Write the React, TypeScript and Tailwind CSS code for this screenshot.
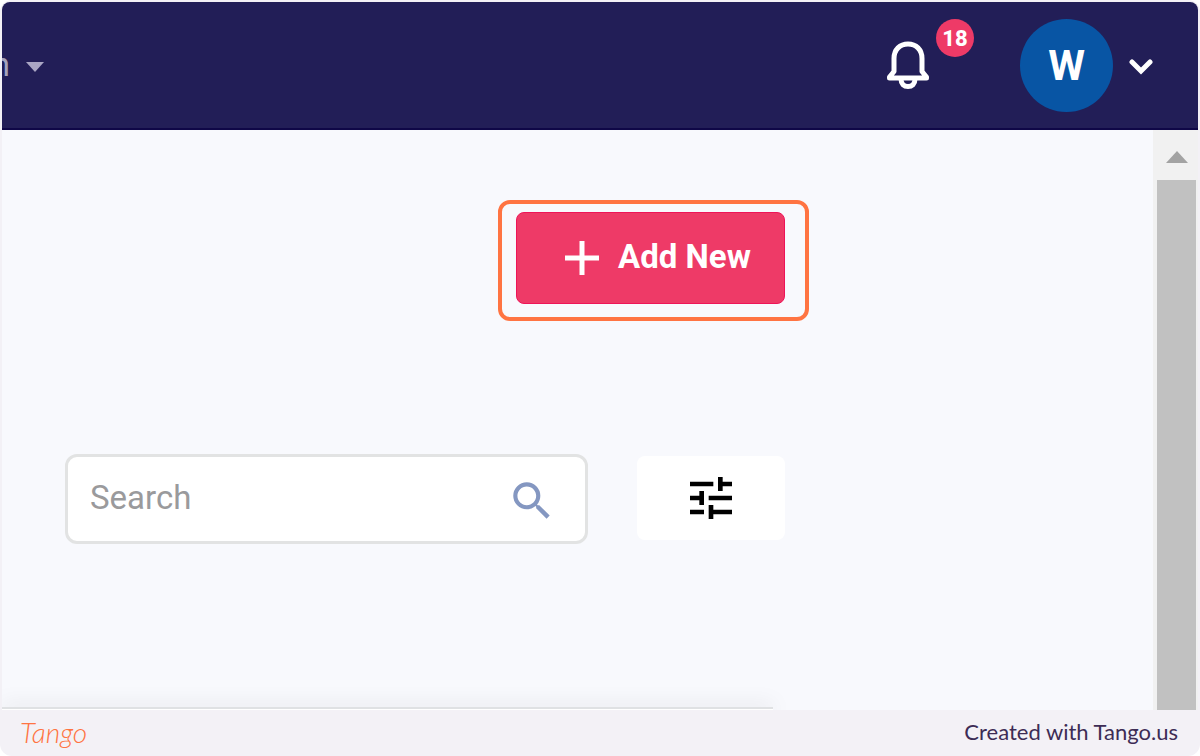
import { MdSearch, MdTune } from 'react-icons/md';

const NOTIFICATION_COUNT = 18;

function BellIcon() {
    return (
        <svg viewBox="0 0 44 50" className="h-[50px] w-11" fill="none" stroke="white" strokeWidth="5" strokeLinejoin="round" aria-hidden="true">
            <path d="M3.5 38V37L8 31.5V18.5C8 9.5 14 4 22 4S36 9.5 36 18.5V31.5L40.5 37V38Z" />
            <path d="M15 39C15 44 18 46.5 22 46.5S29 44 29 39" />
        </svg>
    );
}

function Header() {
    return (
        <header className="flex h-32 shrink-0 items-center justify-between border-b-2 border-[#0f0747] bg-[#221e57] pr-[45px]">
            <button type="button" className="flex items-center gap-4" aria-label="Open menu">
                <span className="flex w-2 justify-end overflow-hidden text-[33px] leading-10 text-[#a5a3bd]">n</span>
                <svg viewBox="0 0 20 10" className="mt-1 h-[10px] w-5" aria-hidden="true">
                    <path d="M0 0H18L9 10Z" fill="#aaa6c4" />
                </svg>
            </button>

            <div className="flex items-center">
                <button type="button" className="relative mr-[90px]" aria-label="Notifications">
                    <BellIcon />
                    <span className="absolute -top-[21px] left-[50px] flex size-[38px] items-center justify-center rounded-full bg-[#ee3a67] text-[22px] font-extrabold text-white">
                        {NOTIFICATION_COUNT}
                    </span>
                </button>
                <button type="button" className="flex items-center gap-4" aria-label="Account">
                    <span className="flex size-[93px] items-center justify-center rounded-full bg-[#0855a4] text-[42px] font-bold text-white">
                        W
                    </span>
                    <svg viewBox="0 0 24 16" className="mt-1 h-4 w-6" fill="none" stroke="white" strokeWidth="5" strokeLinecap="round" aria-hidden="true">
                        <path d="M3 3L12 12L21 3" />
                    </svg>
                </button>
            </div>
        </header>
    );
}

function Scrollbar() {
    return (
        <div className="flex w-[45px] shrink-0 flex-col bg-[#f1f1f1] pr-[2px] pl-1" aria-hidden="true">
            <div className="flex h-[50px] items-center justify-center pt-1">
                <svg viewBox="0 0 22 12" className="h-3 w-[22px]">
                    <path d="M0 12H22L11 0Z" fill="#a3a3a3" />
                </svg>
            </div>
            <div className="flex-1 bg-[#c1c1c1]" />
        </div>
    );
}

export default function App() {
    return (
        <div className="bg-white font-[Roboto,sans-serif]">
            <div className="flex min-h-screen flex-col rounded-xl bg-[#f3f1f6] px-[2px] pt-[2px]">
                <div className="flex flex-1 flex-col overflow-hidden rounded-t-lg">
                    <Header />
                    <div className="flex flex-1">
                        <main className="flex flex-1 flex-col overflow-hidden bg-[#f8f9fd]">
                            <div className="flex justify-end pt-[82px] pr-[368px]">
                                <div className="relative">
                                    <button
                                        type="button"
                                        className="flex h-[92px] w-[269px] items-center gap-[18px] rounded-lg border border-[#ee1458] bg-[#ee3a67] pl-[47px] text-[33px] font-bold whitespace-nowrap text-white"
                                    >
                                        <svg viewBox="0 0 36 36" className="size-9 shrink-0" stroke="white" strokeWidth="5" aria-hidden="true">
                                            <path d="M1 18H35M18 1V35" />
                                        </svg>
                                        <span className="pb-[2px]">Add New</span>
                                    </button>
                                    {/* Step highlight */}
                                    <div className="pointer-events-none absolute -top-3 -right-6 -bottom-[17px] -left-[18px] rounded-xl border-4 border-[#ff7442]" />
                                </div>
                            </div>

                            <div className="mt-[150px] flex items-start gap-[49px] pr-[368px] pl-[63px]">
                                <label className="flex h-[90px] min-w-0 flex-1 items-center rounded-xl border-[3px] border-[#e2e3e3] bg-white pr-7 pl-[22px]">
                                    <input
                                        type="text"
                                        aria-label="Search"
                                        placeholder="Search"
                                        className="min-w-0 flex-1 pb-[2px] text-[33px] leading-10 text-gray-700 outline-none placeholder:text-[#9a9a9c]"
                                    />
                                    <MdSearch className="mt-1 size-[50px] shrink-0 text-[#8497c1]" aria-hidden="true" />
                                </label>
                                <button
                                    type="button"
                                    aria-label="Filters"
                                    className="mt-[2px] flex h-[84px] w-[148px] shrink-0 items-center justify-center rounded-lg bg-white text-black"
                                >
                                    <MdTune className="size-14" aria-hidden="true" />
                                </button>
                            </div>

                            {/* Top edge of the results card */}
                            <div className="mt-auto mr-[380px] h-[3px] border-t-2 border-[#dfe1e3] bg-white shadow-[0_0_20px_rgba(0,0,0,0.25)]" />
                        </main>
                        <Scrollbar />
                    </div>
                </div>

                <footer className="flex h-[46px] shrink-0 items-center justify-between pr-5 pb-[2px] pl-[18px]">
                    <a href="#" className="font-[Lato,sans-serif] text-[28px] leading-8 font-light text-[#ff7442] italic">
                        Tango
                    </a>
                    <a href="#" className="font-[Lato,sans-serif] text-[22px] leading-8 text-[#3d2c55]">
                        Created with Tango.us
                    </a>
                </footer>
            </div>
        </div>
    );
}
